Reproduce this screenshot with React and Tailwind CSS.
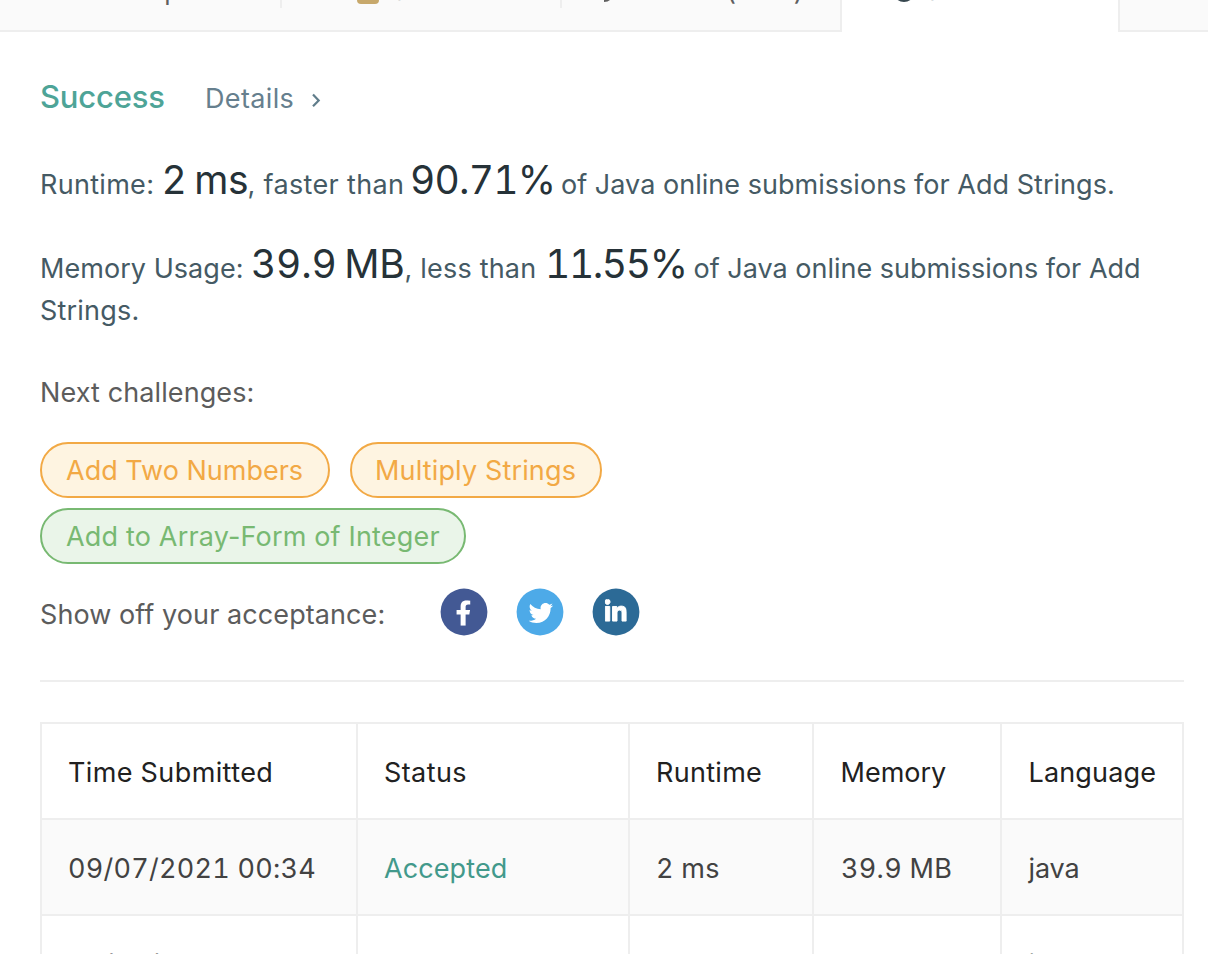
import { FaFacebookF, FaTwitter, FaLinkedinIn } from "react-icons/fa";

const label = "-mt-[25px] h-8";

function Tabs() {
  return (
    <div className="flex h-8 shrink-0 overflow-hidden bg-[#fafafa] text-[26px] leading-[32px] text-[#5f5f5f]">
      <div className="flex h-8 w-[282px] border-b-2 border-[#eeeeee]">
        <span className={`w-[280px] pl-[87px] tracking-[-0.3px] ${label}`}>Description</span>
        <i className="h-2 w-[2px] bg-[#eeeeee]" />
      </div>
      <div className="flex h-8 w-[280px] border-b-2 border-[#eeeeee] pl-[75px]">
        <i className="-mt-[18px] h-[22px] w-[22px] rounded bg-[#c7a86b]" />
        <span className={`w-[181px] pl-[12px] tracking-[-0.4px] ${label}`}>Solution</span>
        <i className="h-2 w-[2px] bg-[#eeeeee]" />
      </div>
      <div className="flex h-8 w-[280px] border-r-2 border-b-2 border-[#eeeeee] pl-[36px]">
        <svg className="-mt-[20px] h-[22px] w-[16px] shrink-0" viewBox="0 0 16 22">
          <path d="M1 14a6 6 0 1 1 12 0c0 4-2 7-7 7" fill="none" stroke="#5f5f5f" strokeWidth="2" />
        </svg>
        <span className={`w-[112px] pl-[9px] ${label}`}>Discuss</span>
        <span className={`tracking-[-2px] tabular-nums ${label}`}>(999+)</span>
      </div>
      <div className="flex h-8 w-[276px] bg-white pl-[51px] text-[#37474f]">
        <svg className="-mt-[20px] h-[22px] w-[22px] shrink-0" viewBox="0 0 22 22">
          <circle cx="11" cy="11" r="9.5" fill="none" stroke="#37474f" strokeWidth="3" />
          <path d="M11 6v5l4 2" fill="none" stroke="#37474f" strokeWidth="2" />
        </svg>
        <span className={`pl-[9px] tracking-[-0.4px] ${label}`}>Submissions</span>
      </div>
      <div className="h-8 flex-1 border-b-2 border-l-2 border-[#eeeeee]" />
    </div>
  );
}

const big = "text-[39px] leading-[0] text-[#263238] tabular-nums";
const pill = "flex h-14 items-center rounded-full border-2 pt-[2px] pl-[24px]";

function Social({ fill, children }) {
  return (
    <a className="block h-12 w-12">
      <svg className="h-12 w-12 text-white" viewBox="0 0 48 48">
        <circle cx="24" cy="24" r="23.4" fill={fill} />
        {children}
      </svg>
    </a>
  );
}

function Result() {
  return (
    <section className="text-[27px] leading-[42px] whitespace-pre text-[#455a64]">
      <div className="flex h-[42px] items-baseline">
        <h1 className="w-[165px] text-[31px] font-medium tracking-[-0.2px] text-[#4ea497]">Success</h1>
        <a className="flex items-center text-[#667f8e]">
          <span className="w-[106px] tracking-[0.35px]">Details</span>
          <svg className="mt-[2px] h-[15px] w-[10px]" viewBox="0 0 10 15">
            <path d="M2 1.5 7.7 7.4 2 13.3" fill="none" stroke="#607d8b" strokeWidth="2.2" />
          </svg>
        </a>
      </div>
      <p className="mt-[46px] flex h-[42px] items-baseline">
        <span className="w-[121.5px] tracking-[0.3px]">Runtime:</span>
        <span className={`w-[86px] tracking-[-0.5px] [word-spacing:-2px] ${big}`}>2 ms</span>
        <span className="w-[162.5px] tracking-[0.35px]">, faster than</span>
        <span className={`w-[151px] tracking-[-0.8px] ${big}`}>90.71%</span>
        <span className="tracking-[0.03px]">of Java online submissions for Add Strings.</span>
      </p>
      <p className="mt-[42px] flex h-[42px] items-baseline">
        <span className="w-[211px] tracking-[0.05px]">Memory Usage:</span>
        <span className={`w-[153.5px] tracking-[-0.2px] [word-spacing:-2.5px] ${big}`}>39.9 MB</span>
        <span className="w-[140.5px] tracking-[0.2px]">, less than</span>
        <span className={`w-[148.5px] tracking-[-1.4px] ${big}`}>11.55%</span>
        <span>of Java online submissions for Add</span>
      </p>
      <p className="h-[42px] tracking-[0.2px]">Strings.</p>
    </section>
  );
}

function Challenges() {
  return (
    <section className="mt-[40px] text-[27px] leading-[42px] whitespace-pre text-[#5c5c5c]">
      <p className="tracking-[0.1px]">Next challenges:</p>
      <div className="mt-[28px] flex flex-wrap gap-x-5 gap-y-[10px]">
        <a className={`w-[290px] border-[#f2a945] bg-[#fef4e1] text-[#f2a945] ${pill}`}>Add Two Numbers</a>
        <a className={`w-[252px] border-[#f2a945] bg-[#fef4e1] tracking-[0.15px] text-[#f2a945] ${pill}`}>
          <span className="-ml-px">Multiply Strings</span>
        </a>
        <div className="basis-full">
          <a className={`w-[426px] border-[#78b972] bg-[#eaf5e9] tracking-[0.17px] text-[#78b972] ${pill}`}>Add to Array-Form of Integer</a>
        </div>
      </div>
      <div className="mt-6 flex h-12 items-center">
        <span className="w-[400px] pt-[6px] tracking-[0.08px]">Show off your acceptance:</span>
        <div className="flex gap-[28px]">
          <Social fill="#435994">
            <FaFacebookF x="15.4" y="12.2" className="h-[25.5px] w-[16px]" />
          </Social>
          <Social fill="#4daae8">
            <FaTwitter x="12.6" y="12.8" className="h-[24.5px] w-[24.5px]" />
          </Social>
          <Social fill="#2c6a96">
            <FaLinkedinIn x="12.9" y="11.2" preserveAspectRatio="none" stroke="white" strokeWidth="20" className="h-[25px] w-[21.6px]" />
          </Social>
        </div>
      </div>
    </section>
  );
}

const columns = [
  { title: "Time Submitted", head: "w-[318px] border-l-2 pl-[26px] tracking-[0.4px]", cell: "border-l-2 pl-[26px] tracking-[0.25px]" },
  { title: "Status", head: "w-[272px] pl-[26px] tracking-[0.4px]", cell: "pl-[26px] tracking-[0.1px] text-[#42998b]" },
  { title: "Runtime", head: "w-[184px] pl-[26px] tracking-[0.3px]", cell: "pl-[26px] tracking-[0.3px]" },
  { title: "Memory", head: "w-[188px] pl-[26.5px]", cell: "pl-[27px] tracking-[0.3px]" },
  { title: "Language", head: "w-[182px] pl-[26.5px] tracking-[0.15px]", cell: "pl-[26.5px] tracking-[-0.1px]" },
];
const rows = [
  ["09/07/2021 00:34", "Accepted", "2 ms", "39.9 MB", "java"],
  ["09/07/2021 00:33", "Accepted", "4 ms", "39.8 MB", "java"],
];

function Submissions() {
  return (
    <table className="mt-[40px] w-[1144px] table-fixed border-separate border-spacing-0 text-left text-[27px] leading-[42px] whitespace-pre text-[#424242] tabular-nums">
      <thead>
        <tr>
          {columns.map((c) => (
            <th key={c.title} className={`h-[98px] border-t-2 border-r-2 border-b-2 border-[#eeeeee] pt-[4px] font-normal text-[#212121] ${c.head}`}>
              {c.title}
            </th>
          ))}
        </tr>
      </thead>
      <tbody>
        {rows.map((row, r) => (
          <tr key={r} className="odd:bg-[#fafafa]">
            {row.map((v, i) => (
              <td key={i} className={`h-[96px] border-r-2 border-b-2 border-[#eeeeee] pt-[4px] ${columns[i].cell}`}>
                {v}
              </td>
            ))}
          </tr>
        ))}
      </tbody>
    </table>
  );
}

export default function App() {
  return (
    <div className="flex h-[954px] w-[1208px] flex-col overflow-hidden bg-white font-['Inter',sans-serif]">
      <Tabs />
      <main className="px-10 pt-[44px]">
        <Result />
        <Challenges />
        <div className="mt-[44px] h-[2px] w-[1144px] bg-[#eeeeee]" />
        <Submissions />
      </main>
    </div>
  );
}
